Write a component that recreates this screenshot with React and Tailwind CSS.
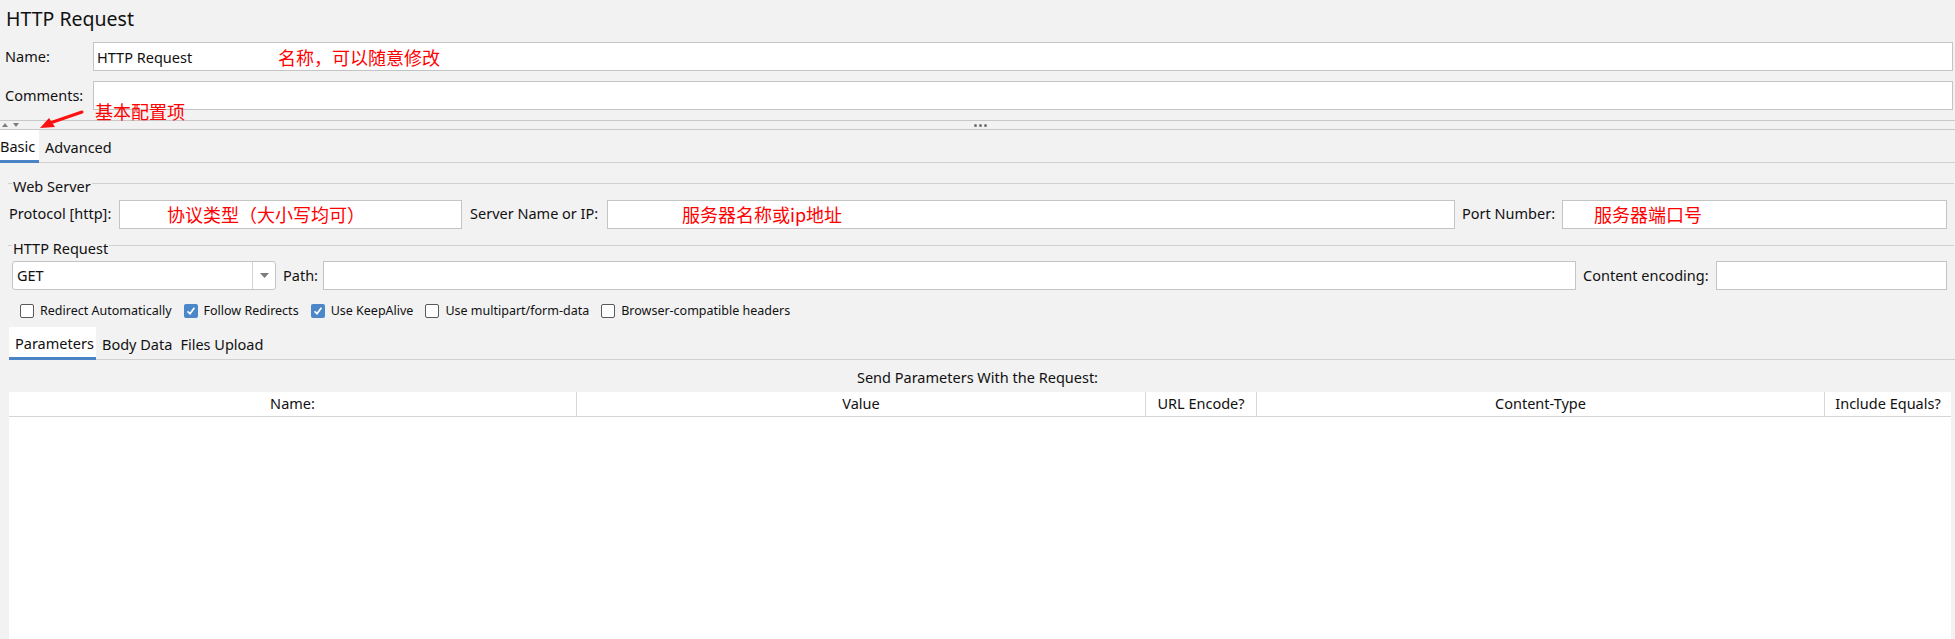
import React from 'react'

const font = { fontFamily: '"Noto Sans", "Noto Sans CJK SC", sans-serif' }

function Field({ className = '', children }) {
  return (
    <div className={`relative h-[29px] border border-[#c4c4c4] bg-white ${className}`}>
      {children}
    </div>
  )
}

function Note({ left, children }) {
  return (
    <span
      className="absolute top-1/2 -translate-y-1/2 text-[18px] leading-none text-[#ff0000] whitespace-nowrap"
      style={{ left, fontFamily: '"Noto Sans CJK SC", sans-serif' }}
    >
      {children}
    </span>
  )
}

function GroupTitle({ title }) {
  return (
    <div className="flex items-start pl-[8px] pr-[1px]">
      <div className="mt-[6px] w-[4px] border-t border-[#d0d0d0]" />
      <span className="px-[1px] text-[14.5px] leading-[18px] text-[#111] whitespace-nowrap">{title}</span>
      <div className="mt-[6px] flex-1 border-t border-[#d0d0d0]" />
    </div>
  )
}

function CheckBox({ checked, label }) {
  return (
    <div className="flex items-center gap-[6px]">
      {checked ? (
        <div className="flex h-[14px] w-[14px] items-center justify-center rounded-[2px] bg-[#4c88c9]">
          <svg width="12" height="12" viewBox="0 0 12 12">
            <path d="M2.6 6.3 L5 8.8 L9.4 2.8" fill="none" stroke="white" strokeWidth="1.7" />
          </svg>
        </div>
      ) : (
        <div className="h-[14px] w-[14px] rounded-[2px] border border-[#5a5a5a] bg-white" />
      )}
      <span className="text-[12.5px] leading-none text-[#111] whitespace-nowrap">{label}</span>
    </div>
  )
}

const columns = [
  { name: 'Name:', w: 'w-[568px]' },
  { name: 'Value', w: 'w-[569px]' },
  { name: 'URL Encode?', w: 'w-[111px]' },
  { name: 'Content-Type', w: 'w-[568px]' },
  { name: 'Include Equals?', w: 'flex-1' },
]

export default function App() {
  return (
    <div className="relative h-[639px] w-full overflow-hidden bg-[#f2f2f2] text-[#111]" style={font}>
      {/* title */}
      <div className="h-[42px] pl-[6px] pt-[5px] text-[19.5px] leading-[28px] text-[#111]">HTTP Request</div>

      {/* name / comments */}
      <div className="flex h-[29px] items-center pr-[2px]">
        <span className="w-[93px] pl-[5px] text-[14.5px]">Name:</span>
        <Field className="flex-1">
          <span className="absolute left-[3px] top-1/2 -translate-y-1/2 text-[14.5px] leading-none">HTTP Request</span>
          <Note left="184px">名称，可以随意修改</Note>
        </Field>
      </div>
      <div className="mt-[10px] flex h-[29px] items-center pr-[2px]">
        <span className="w-[93px] pl-[5px] text-[14.5px]">Comments:</span>
        <Field className="flex-1" />
      </div>

      {/* splitter */}
      <div className="relative mt-[10px] flex h-[10px] items-center border-y border-[#c8c8c8]">
        <div className="flex items-center gap-[5px] pl-[2px]">
          <svg width="6" height="4" viewBox="0 0 6 4"><path d="M0 4 L3 0 L6 4 Z" fill="#7d7d7d" /></svg>
          <svg width="6" height="4" viewBox="0 0 6 4"><path d="M0 0 L3 4 L6 0 Z" fill="#7d7d7d" /></svg>
        </div>
        <div className="absolute left-[974px] flex gap-[2px]">
          <div className="h-[3px] w-[3px] rounded-full bg-[#707070]" />
          <div className="h-[3px] w-[3px] rounded-full bg-[#707070]" />
          <div className="h-[3px] w-[3px] rounded-full bg-[#707070]" />
        </div>
      </div>

      {/* basic / advanced tabs */}
      <div className="flex h-[33px] items-stretch border-b border-[#d0d0d0]">
        <div className="-mb-px flex w-[39px] items-center border-b-[3px] border-[#4a84c6] bg-white pt-[3px] text-[14.5px]">Basic</div>
        <div className="flex items-center pl-[6px] pt-[3px] text-[14.5px]">Advanced</div>
      </div>

      {/* web server */}
      <div className="mt-[14px]">
        <GroupTitle title="Web Server" />
      </div>
      <div className="mt-[4px] flex h-[30px] items-center pl-[9px] pr-[8px] whitespace-nowrap">
        <span className="w-[110px] text-[14.5px]">Protocol [http]:</span>
        <Field className="w-[343px]">
          <Note left="47px">协议类型（大小写均可）</Note>
        </Field>
        <span className="w-[145px] pl-[8px] text-[14.5px]">Server Name or IP:</span>
        <Field className="w-[848px]">
          <Note left="74px">服务器名称或ip地址</Note>
        </Field>
        <span className="w-[107px] pl-[7px] text-[14.5px]">Port Number:</span>
        <Field className="flex-1">
          <Note left="31px">服务器端口号</Note>
        </Field>
      </div>

      {/* http request */}
      <div className="mt-[10px]">
        <GroupTitle title="HTTP Request" />
      </div>
      <div className="mt-[4px] flex h-[29px] items-center pl-[12px] pr-[8px] whitespace-nowrap">
        <div className="flex h-[29px] w-[264px] items-stretch rounded-[3px] border border-[#c4c4c4] bg-white">
          <span className="flex flex-1 items-center pl-[4px] text-[14.5px]">GET</span>
          <div className="flex w-[23px] items-center justify-center border-l border-[#d4d4d4]">
            <svg width="9" height="5" viewBox="0 0 9 5"><path d="M0 0 L9 0 L4.5 5 Z" fill="#7b7b7b" /></svg>
          </div>
        </div>
        <span className="w-[47px] pl-[7px] text-[14.5px]">Path:</span>
        <Field className="w-[1253px]" />
        <span className="w-[140px] pl-[7px] text-[14.5px]">Content encoding:</span>
        <Field className="flex-1" />
      </div>

      {/* options */}
      <div className="mt-[14px] flex h-[14px] items-center gap-[12px] pl-[20px]">
        <CheckBox label="Redirect Automatically" />
        <CheckBox checked label="Follow Redirects" />
        <CheckBox checked label="Use KeepAlive" />
        <CheckBox label="Use multipart/form-data" />
        <CheckBox label="Browser-compatible headers" />
      </div>

      {/* parameter tabs */}
      <div className="ml-[9px] mt-[9px] flex h-[33px] items-stretch border-b border-[#d0d0d0]">
        <div className="-mb-px flex w-[87px] items-center border-b-[3px] border-[#4a84c6] bg-white pl-[6px] pt-[3px] text-[14.5px]">Parameters</div>
        <div className="flex items-center pl-[6px] pt-[3px] text-[14.5px]">Body Data</div>
        <div className="flex items-center pl-[8px] pt-[3px] text-[14.5px]">Files Upload</div>
      </div>

      <div className="flex h-[32px] items-center justify-center pt-[4px] text-[14.5px]">Send Parameters With the Request:</div>

      {/* table */}
      <div className="ml-[9px] mr-[4px] h-[260px] bg-white">
        <div className="flex h-[25px] border-b border-[#d4d4d4]">
          {columns.map((col, i) => (
            <div
              key={col.name}
              className={`${col.w} flex items-center justify-center text-[14.5px] ${i < columns.length - 1 ? 'border-r border-[#d8d8d8]' : ''}`}
            >
              {col.name}
            </div>
          ))}
        </div>
      </div>

      {/* annotation over the splitter */}
      <span
        className="absolute left-[95px] top-[100px] text-[18px] leading-[22px] text-[#ff0000]"
        style={{ fontFamily: '"Noto Sans CJK SC", sans-serif' }}
      >
        基本配置项
      </span>
      <svg className="absolute left-[36px] top-[108px]" width="52" height="24" viewBox="0 0 52 24">
        <line x1="46" y1="4" x2="14" y2="15" stroke="#ff1010" strokeWidth="3" strokeLinecap="round" />
        <path d="M4 20 L13 10 L19 19 Z" fill="#ff1010" />
      </svg>
    </div>
  )
}
